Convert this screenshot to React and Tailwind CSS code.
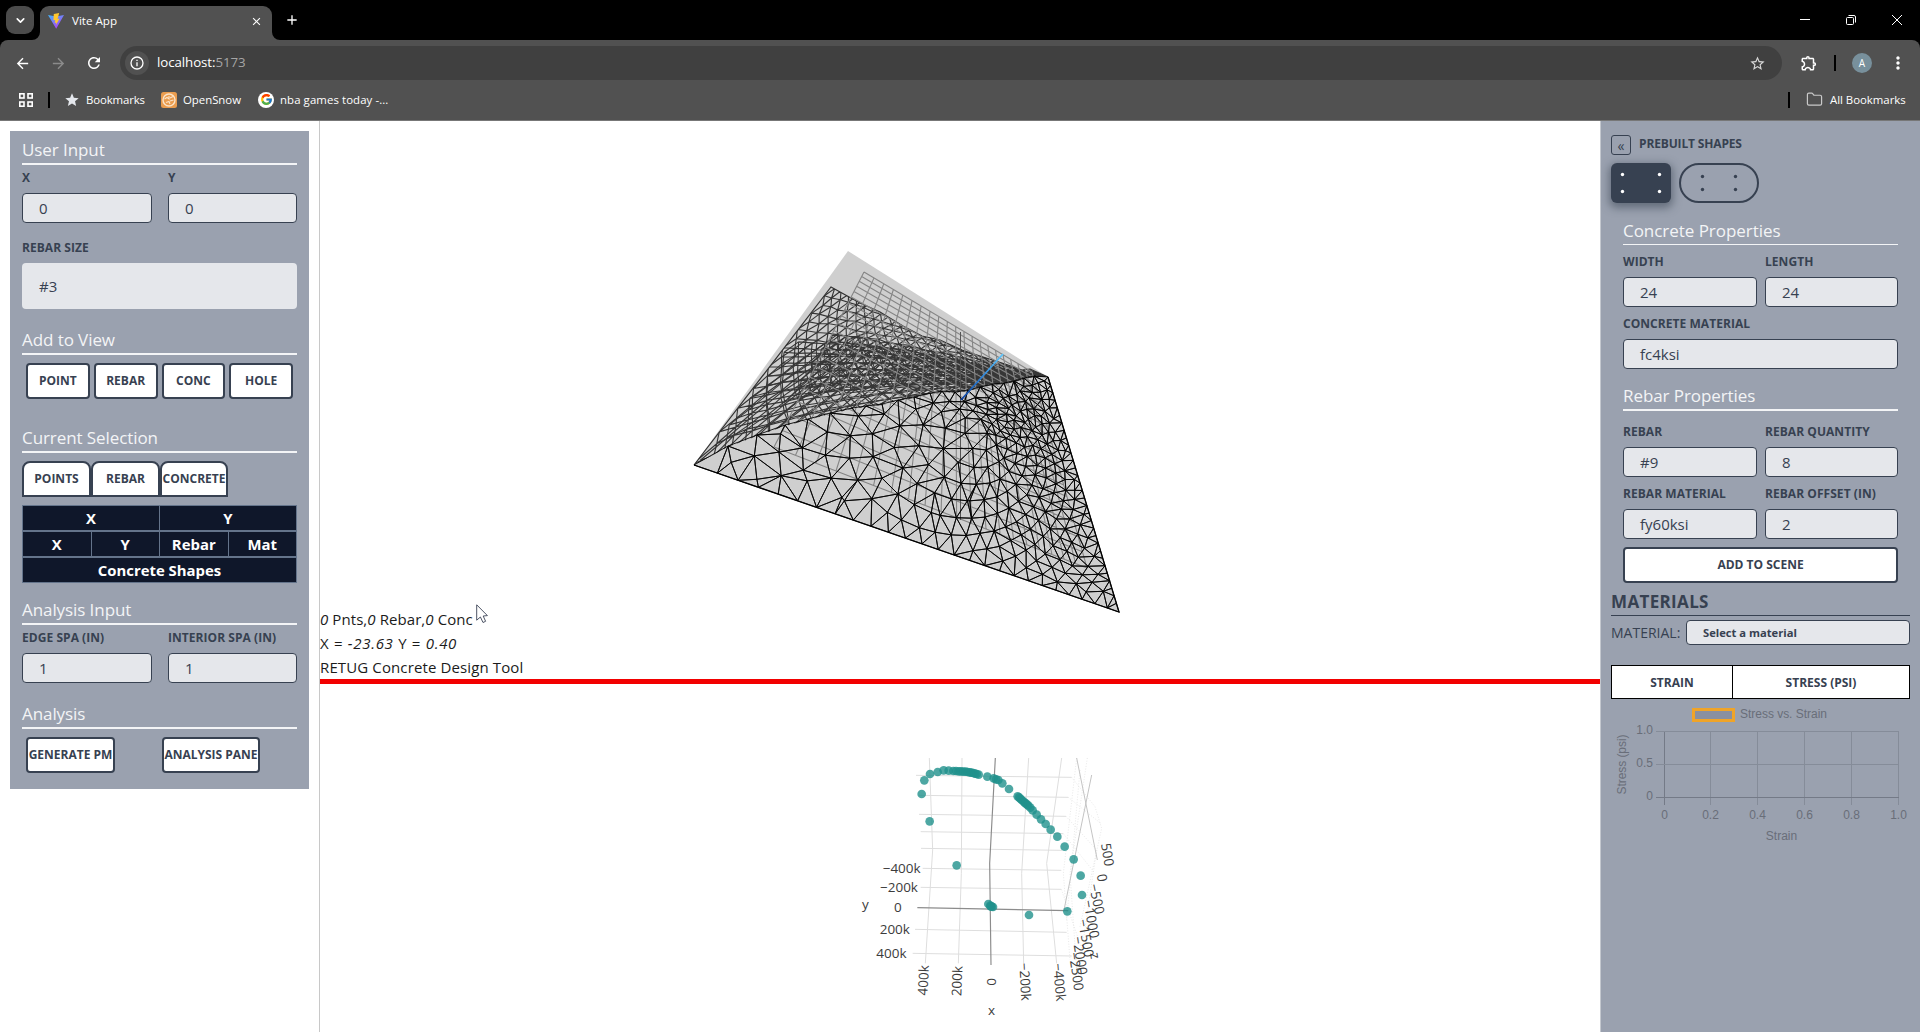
import React from 'react';
import { MdArrowBack, MdArrowForward, MdRefresh, MdStarBorder, MdStar, MdMoreVert, MdOutlineExtension, MdClose, MdAdd } from 'react-icons/md';
import { FcGoogle } from 'react-icons/fc';
import { ChevronDown, Folder } from 'lucide-react';

/* ---------- browser chrome ---------- */

function ViteLogo() {
  return (
    <svg width="16" height="16" viewBox="0 0 16 16" className="shrink-0">
      <defs>
        <linearGradient id="vite" x1="0" y1="0" x2="0.6" y2="1">
          <stop offset="0" stopColor="#41b7fb" />
          <stop offset="1" stopColor="#b040f5" />
        </linearGradient>
      </defs>
      <path d="M0 2 L8 3.4 L16 2 L8.2 15.8 Z" fill="url(#vite)" />
      <path d="M11.2 0 L5.8 1 L5.4 7.2 L7.2 6.9 L6.8 10 L8.3 9.5 L7.8 12.2 L11.6 5.6 L9.6 6 Z" fill="#ffc72e" />
    </svg>
  );
}

function TabStrip() {
  return (
    <div className="flex h-10 items-end bg-black text-white">
      <div className="ml-[6px] mb-[6px] flex h-7 w-7 items-center justify-center rounded-[9px] bg-[#4b4b4b]">
        <ChevronDown size={13} strokeWidth={3} />
      </div>
      <svg width="8" height="8" className="-ml-[2px] shrink-0"><path d="M8 0 V8 H0 A8 8 0 0 0 8 0" fill="#515151" /></svg>
      <div className="flex h-[34px] w-[232px] items-center rounded-t-[9px] bg-[#515151] pl-2 pr-[9px] pb-1">
        <ViteLogo />
        <span className="ml-2 flex-1 text-[11.6px]">Vite App</span>
        <MdClose size={13} />
      </div>
      <svg width="8" height="8" className="shrink-0"><path d="M0 0 V8 H8 A8 8 0 0 1 0 0" fill="#515151" /></svg>
      <MdAdd size={16} className="mb-3 ml-1" />
      <div className="mb-3 ml-auto flex h-4 items-center pr-[17px]">
        <svg width="104" height="16" viewBox="0 0 104 16" fill="none" stroke="white">
          <path d="M1 7.5 H11" />
          <rect x="47.5" y="5.5" width="7" height="7" rx="1" />
          <path d="M49.5 3.5 H55 Q56.5 3.5 56.5 5 V10.5" />
          <path d="M93 3 L103 13 M103 3 L93 13" />
        </svg>
      </div>
    </div>
  );
}

function Toolbar() {
  return (
    <div className="flex h-[46px] items-start rounded-t-[8px] bg-[#515151] pt-[6px] text-white">
      <div className="flex h-[34px] w-[120px] shrink-0 items-center pl-[14px]">
        <MdArrowBack size={17} />
        <MdArrowForward size={17} className="ml-[19px] text-[#8b8b8b]" />
        <MdRefresh size={18} className="ml-[18px]" />
      </div>
      <div className="flex h-[34px] w-[1662px] items-center rounded-full bg-[#404040] pl-[5px] pr-4">
        <div className="flex h-6 w-6 items-center justify-center rounded-full bg-[#515151]">
          <svg width="14" height="14" viewBox="0 0 14 14" fill="none" stroke="white" strokeWidth="1.3">
            <circle cx="7" cy="7" r="6" />
            <path d="M7 6.2 V10.3 M7 3.7 V5" />
          </svg>
        </div>
        <span className="ml-2 flex-1 text-[13.3px] tracking-[-0.08px]">localhost:<span className="text-[#a5a5a5]">5173</span></span>
        <MdStarBorder size={17} className="text-[#d8d8d8]" />
      </div>
      <div className="flex h-[34px] flex-1 items-center">
        <MdOutlineExtension size={18} className="ml-[18px]" />
        <span className="ml-[16px] h-4 w-[2px] bg-black" />
        <span className="ml-4 flex h-5 w-5 items-center justify-center rounded-full bg-[#78909c] text-[10px]">A</span>
        <MdMoreVert size={20} className="ml-4" />
      </div>
    </div>
  );
}

function BookmarksBar() {
  return (
    <div className="flex h-[35px] items-center border-b border-[#777] bg-[#515151] pb-[7px] text-[11.4px] tracking-[-0.02px] text-white">
      <svg width="14" height="14" viewBox="0 0 14 14" fill="none" stroke="white" strokeWidth="1.6" className="ml-[19px]">
        <rect x="0.8" y="0.8" width="4.2" height="4.2" /><rect x="9" y="0.8" width="4.2" height="4.2" />
        <rect x="0.8" y="9" width="4.2" height="4.2" /><rect x="9" y="9" width="4.2" height="4.2" />
      </svg>
      <span className="ml-[15px] h-4 w-[2px] bg-black" />
      <MdStar size={16} className="ml-[14px] text-[#e4e7ec]" />
      <span className="ml-[6px] w-[59px] whitespace-nowrap tracking-[-0.12px]">Bookmarks</span>
      <svg width="16" height="16" viewBox="0 0 16 16" className="ml-[16px]">
        <rect width="16" height="16" rx="2.5" fill="#ea9c4e" />
        <circle cx="8" cy="8" r="6" fill="none" stroke="#fbe3c8" strokeWidth="1.4" />
        <path d="M3.5 7 L6 5.5 L8 7 L8 4 M9 9 L12.5 8 M9 6 L12 4.6 M5 10.5 L8 9.5 L9 12" stroke="#fbe3c8" fill="none" strokeWidth="1.1" />
      </svg>
      <span className="ml-[6px] w-[59px] whitespace-nowrap">OpenSnow</span>
      <span className="ml-4 flex h-4 w-4 items-center justify-center rounded-full bg-white"><FcGoogle size={13} /></span>
      <span className="ml-[6px] whitespace-nowrap tracking-[0.09px]">nba games today -...</span>
      <span className="ml-auto h-4 w-[2px] bg-black" />
      <Folder size={17} strokeWidth={1.7} className="ml-4 text-[#c9c9c9]" />
      <span className="ml-[7px] mr-[15px] w-[75px] whitespace-nowrap">All Bookmarks</span>
    </div>
  );
}

/* ---------- form pieces ---------- */

function Heading({ className = '', children }) {
  return <h2 className={'h-7 whitespace-nowrap border-b-2 border-[#f3f4f6] text-[17px] font-normal leading-[25px] tracking-[-0.08px] text-[#f3f4f6] ' + className}>{children}</h2>;
}

function Field({ label, value, className = '' }) {
  return (
    <div className={className}>
      <div className="h-4 whitespace-nowrap text-[12px] font-bold leading-[15px] tracking-[0.05px] text-[#374151]">{label}</div>
      <div className="mt-[7px] h-[30px] rounded-[4px] border border-[#374151] bg-[#e5e7eb] pl-4 text-[15px] leading-[29px] text-[#374151]">{value}</div>
    </div>
  );
}

function Button({ className = '', children }) {
  return (
    <button className={'flex h-9 items-center justify-center overflow-hidden whitespace-nowrap rounded-[4px] border-2 border-[#374151] bg-white text-[12px] font-bold text-[#374151] ' + className}>
      {children}
    </button>
  );
}

function SelectionTab({ className = '', children }) {
  return (
    <button className={'flex h-9 items-center justify-center whitespace-nowrap rounded-t-[8px] border-2 border-[#374151] bg-white text-[12px] font-bold text-[#374151] ' + className}>
      {children}
    </button>
  );
}

function SelectionRow({ cells }) {
  return (
    <div className="flex h-[26px] border border-[#64748b] bg-[#0f172a] text-[14.9px] font-bold leading-6 text-white">
      {cells.map((c, i) => (
        <div key={i} className={'flex-1 text-center ' + (i ? 'border-l border-[#64748b]' : '')}>{c}</div>
      ))}
    </div>
  );
}

function LeftPanel() {
  return (
    <aside className="w-[319px] shrink-0 bg-white pl-[10px] pt-[10px]">
      <div className="h-[658px] w-[299px] bg-[#9aa1af] pl-3 pr-3 pt-[6px]">
        <Heading>User Input</Heading>
        <div className="mt-[5px] flex gap-4">
          <Field label="X" value="0" className="w-[130px]" />
          <Field label="Y" value="0" className="w-[129px]" />
        </div>
        <div className="mt-[17px] h-4 text-[12px] font-bold leading-[15px] tracking-[0.05px] text-[#374151]">REBAR SIZE</div>
        <div className="mt-[7px] h-[46px] rounded-[4px] bg-[#e5e7eb] pl-[17px] text-[15px] leading-[47px] text-[#374151]">#3</div>
        <Heading className="mt-[18px]">Add to View</Heading>
        <div className="mt-2 grid grid-cols-4 gap-1 px-1">
          <Button>POINT</Button>
          <Button>REBAR</Button>
          <Button>CONC</Button>
          <Button>HOLE</Button>
        </div>
        <Heading className="mt-[26px]">Current Selection</Heading>
        <div className="mt-2 flex">
          <SelectionTab className="w-[69px]">POINTS</SelectionTab>
          <SelectionTab className="w-[69px]">REBAR</SelectionTab>
          <SelectionTab className="w-[68px]">CONCRETE</SelectionTab>
        </div>
        <div className="mt-2">
          <SelectionRow cells={['X', 'Y']} />
          <SelectionRow cells={['X', 'Y', 'Rebar', 'Mat']} />
          <SelectionRow cells={['Concrete Shapes']} />
        </div>
        <Heading className="mt-[14px]">Analysis Input</Heading>
        <div className="mt-[5px] flex gap-4">
          <Field label="EDGE SPA (IN)" value="1" className="w-[130px]" />
          <Field label="INTERIOR SPA (IN)" value="1" className="w-[129px]" />
        </div>
        <Heading className="mt-[18px]">Analysis</Heading>
        <div className="mt-2 flex pl-1">
          <Button className="w-[89px]">GENERATE PM</Button>
          <Button className="ml-[47px] w-[98px]">ANALYSIS PANE</Button>
        </div>
      </div>
    </aside>
  );
}

/* ---------- 3D concrete surface ---------- */

// Projective map from the unit square onto quad p0(0,0) p1(1,0) p2(1,1) p3(0,1).
function projective([p0, p1, p2, p3]) {
  const dx1 = p1[0] - p2[0], dx2 = p3[0] - p2[0], dx3 = p0[0] - p1[0] + p2[0] - p3[0];
  const dy1 = p1[1] - p2[1], dy2 = p3[1] - p2[1], dy3 = p0[1] - p1[1] + p2[1] - p3[1];
  const d = dx1 * dy2 - dx2 * dy1;
  const g = (dx3 * dy2 - dx2 * dy3) / d, h = (dx1 * dy3 - dx3 * dy1) / d;
  return (u, v) => {
    const w = g * u + h * v + 1;
    return [
      ((p1[0] - p0[0] + g * p1[0]) * u + (p3[0] - p0[0] + h * p3[0]) * v + p0[0]) / w,
      ((p1[1] - p0[1] + g * p1[1]) * u + (p3[1] - p0[1] + h * p3[1]) * v + p0[1]) / w,
    ];
  };
}

const seg = (a, b) => `M${a[0].toFixed(1)} ${a[1].toFixed(1)}L${b[0].toFixed(1)} ${b[1].toFixed(1)}`;

function noise(i, j) {
  const s = Math.sin(i * 127.1 + j * 311.7) * 43758.5453;
  return s - Math.floor(s) - 0.5;
}

// Bowyer-Watson triangulation; returns index triples.
function triangulate(points) {
  const pts = points.concat([[-9000, -9000], [12000, -9000], [800, 14000]]);
  const n = points.length;
  const make = (a, b, c) => {
    const [ax, ay] = pts[a], [bx, by] = pts[b], [cx, cy] = pts[c];
    const d = 2 * (ax * (by - cy) + bx * (cy - ay) + cx * (ay - by)) || 1e-9;
    const A = ax * ax + ay * ay, B = bx * bx + by * by, C = cx * cx + cy * cy;
    const x = (A * (by - cy) + B * (cy - ay) + C * (ay - by)) / d;
    const y = (A * (cx - bx) + B * (ax - cx) + C * (bx - ax)) / d;
    return { v: [a, b, c], x, y, r: (ax - x) ** 2 + (ay - y) ** 2 };
  };
  let tris = [make(n, n + 1, n + 2)];
  for (let i = 0; i < n; i++) {
    const [px, py] = pts[i];
    const edges = new Map();
    const keep = [];
    for (const t of tris) {
      if ((px - t.x) ** 2 + (py - t.y) ** 2 < t.r) {
        for (const [a, b] of [[t.v[0], t.v[1]], [t.v[1], t.v[2]], [t.v[2], t.v[0]]]) {
          const key = a < b ? a * 5000 + b : b * 5000 + a;
          edges.set(key, edges.has(key) ? null : [a, b]);
        }
      } else keep.push(t);
    }
    edges.forEach((e) => { if (e) keep.push(make(e[0], e[1], i)); });
    tris = keep;
  }
  return tris.map((t) => t.v).filter((v) => v.every((k) => k < n));
}

function inside([x, y], poly) {
  let hit = false;
  for (let i = 0, j = poly.length - 1; i < poly.length; j = i++) {
    const [xi, yi] = poly[i], [xj, yj] = poly[j];
    if (yi > y !== yj > y && x < ((xj - xi) * (y - yi)) / (yj - yi) + xi) hit = !hit;
  }
  return hit;
}

function edgeDistance([x, y], [ax, ay], [bx, by]) {
  const l = Math.hypot(bx - ax, by - ay);
  return Math.abs((bx - ax) * (ay - y) - (ax - x) * (by - ay)) / l;
}

const L = [694, 465], TR = [1048, 377], BR = [1119, 612];
const ridge = [[728, 446], [757, 435], [785, 425], [808, 419], [830, 413], [852, 408], [866, 406], [882, 404], [898, 400], [914, 397], [930, 393], [942, 391], [955, 392], [968, 390], [980, 387], [992, 384], [1004, 383], [1014, 381], [1024, 378], [1034, 376]];
const nearPoly = [L, ...ridge, TR, BR];

// Near side: nodes walk around concentric ellipses, then get triangulated.
const nearMesh = (() => {
  const pts = [...nearPoly];
  for (let f = 0.055; f < 0.985;) {
    pts.push([L[0] + (BR[0] - L[0]) * f, L[1] + (BR[1] - L[1]) * f]);
    f += 0.05 - 0.022 * f;
  }
  for (let f = 0.035; f < 0.98; f += 0.032) pts.push([TR[0] + (BR[0] - TR[0]) * f, TR[1] + (BR[1] - TR[1]) * f]);
  for (let k = 0; k < 22; k++) {
    const cx = 988 - 6.8 * k, cy = 434 + 4.3 * k, rx = 16.5 * k, ry = 12.4 * k;
    let t = k * 0.37;
    const end = t + Math.PI * 2 - 0.02;
    let i = 0;
    do {
      const c = Math.cos(t), s = Math.sin(t);
      const j = 1.5;
      const p = [cx + rx * c + noise(k, i) * j, cy + ry * s + 0.12 * rx * c + noise(i, k) * j];
      if (inside(p, nearPoly) && edgeDistance(p, L, BR) > 6 && edgeDistance(p, TR, BR) > 4 && ridge.every((q) => Math.hypot(q[0] - p[0], q[1] - p[1]) > 7.5)) pts.push(p);
      const left = (1 - c) / 2;
      const step = 10 + 13 * left * left + 3 * Math.max(0, s);
      t += k ? step / Math.hypot(rx * s, ry * c) : 7;
      i++;
    } while (t < end);
  }
  let d = '';
  for (const [a, b, c] of triangulate(pts)) {
    const mid = [(pts[a][0] + pts[b][0] + pts[c][0]) / 3, (pts[a][1] + pts[b][1] + pts[c][1]) / 3];
    if (inside(mid, nearPoly)) d += seg(pts[a], pts[b]) + seg(pts[b], pts[c]) + seg(pts[c], pts[a]);
  }
  return d;
})();

// Far side: staggered rows sweeping from the left edge toward the right corner.
function farMesh(rows, cols, from, to, ox, oy, start = 0) {
  const at = (r, c) => {
    const s = from + (to - from) * Math.pow(Math.max(0, r) / rows, 0.8);
    const q = Math.max(0, Math.min(1, (c + (r % 2) * 0.5) / cols));
    const t = 1 - Math.pow(1 - q, 1.55 - 0.6 * s);
    const x0 = 694 + 137 * s, y0 = 465 - 178 * s;
    const mx = 842 + 80 * s, my = 396 - 76 * s;
    const u = 1 - t;
    return [
      u * u * x0 + 2 * u * t * mx + t * t * 1047 + noise(r, c) * 2 + ox,
      u * u * y0 + 2 * u * t * my + t * t * (388 - 11 * s) + noise(c, r) * 2.4 + oy,
    ];
  };
  let d = '';
  for (let r = 0; r <= rows; r++)
    for (let c = start; c < cols; c++) {
      d += seg(at(r, c), at(r, c + 1));
      if (r < rows) {
        d += seg(at(r, c), at(r + 1, c));
        d += r % 2 ? seg(at(r, c), at(r + 1, c + 1)) : seg(at(r, c + 1), at(r + 1, c));
      }
    }
  return d;
}

const groundGrid = (() => {
  const p = projective([[864, 272], [1032, 372], [1087, 568], [774, 447]]);
  let d = '';
  for (let i = 0; i <= 20; i++) {
    d += seg(p(i / 20, 0), p(i / 20, 1)) + seg(p(0, i / 20), p(1, i / 20));
  }
  return d;
})();

const toPath = (pts) => 'M' + pts.map((p) => p.join(' ')).join('L') + 'Z';
const skyline = [[831, 287], [860, 303], [880, 312], [903, 326], [922, 336], [940, 340], [962, 350], [980, 356], [1005, 364], [1022, 370], [1030, 369], [1048, 377]];
const near = toPath(nearPoly);
const far = toPath([L, ...skyline, ...[...ridge].reverse().map(([x, y]) => [x, y + 1])]);
const farSparse = farMesh(17, 24, 0, 1, 0, 0);
const farDouble = farMesh(9, 20, 0.03, 0.7, 3, 2);
const farDense = farMesh(8, 34, 0.3, 0.76, -1, 1, 5);

function SurfaceView() {
  return (
    <svg width="1280" height="486" viewBox="320 121 1280 486" className="block overflow-visible">
      <defs>
        <clipPath id="far"><path d={far} /></clipPath>
        <linearGradient id="axis" gradientUnits="userSpaceOnUse" x1="961" y1="400" x2="1003" y2="354">
          <stop offset="0" stopColor="#0b3fa0" /><stop offset="0.4" stopColor="#2476d0" /><stop offset="1" stopColor="#5cc8ff" />
        </linearGradient>
      </defs>
      <path d="M694 465 L848 251 L1048 377 L1119 612 Z" fill="#cfcfcf" />
      <g clipPath="url(#far)" stroke="#363636" fill="none">
        <path d={farSparse} strokeWidth="1.15" />
        <path d={farDouble} strokeWidth="1.1" />
        <path d={farDense} strokeWidth="1.1" />
      </g>
      <path d={'M694 465 L' + skyline.map((p) => p.join(' ')).join('L')} fill="none" stroke="#303030" strokeWidth="1.2" />
      <path d={groundGrid} stroke="#858585" strokeWidth="1.1" fill="none" />
      <path d="M960.5 332 V520" stroke="#555" strokeWidth="1" />
      <path d={nearMesh} stroke="#050505" strokeWidth="0.9" fill="none" />
      <path d="M1048 377 L1119 612 L694 465" fill="none" stroke="#000" strokeWidth="1.3" />
      <path d="M961 400 L1003 354" stroke="url(#axis)" strokeWidth="1.8" />
    </svg>
  );
}

/* ---------- 3D scatter ---------- */

const scatter = [
  [215, 162], [239, 244], [320, 376], [223, 121], [240, 102], [263, 96], [281, 91], [296, 92], [310, 93], [318, 93], [326, 94], [333, 94], [340, 95], [347, 95], [353, 96], [359, 97], [364, 98], [370, 99], [375, 101], [380, 102], [386, 104],
  [412, 110], [431, 115], [438, 118], [445, 120], [457, 130], [477, 147],
  [503, 169], [507, 172], [511, 176], [515, 180], [519, 183], [523, 187], [527, 190], [531, 194], [535, 197], [541, 203], [548, 211], [560, 224], [573, 238], [587, 252], [602, 269], [622, 290], [644, 320], [671, 358], [692, 407], [696, 465], [652, 514], [537, 525],
  [415, 492], [421, 497], [425, 500], [429, 501], [422, 499],
];

const axisLabels = [
  ['−400k', 98, 399, 0], ['−200k', 90, 456, 0], ['0', 132, 516, 0], ['200k', 89, 583, 0], ['400k', 79, 653, 0],
  ['400k', 232, 767, -87], ['200k', 334, 769, -88], ['0', 411, 714, 90], ['−200k', 508, 669, 87], ['−400k', 609, 671, 85],
  ['500', 753, 312, 81], ['0', 740, 404, 81], ['−500', 717, 435, 78], ['−1000', 700, 483, 80], ['−1500', 684, 540, 80], ['−2000', 668, 592, 82], ['−2500', 657, 639, 82],
];

function ScatterView() {
  return (
    <svg width="1280" height="348" viewBox="320 684 1280 348" className="block">
      <g transform="translate(850 740) scale(0.33333)">
        <g stroke="#dedede" strokeWidth="3" fill="none">
          <path d="M238 54 L248 330 L226 670 M336 54 L334 400 L325 670 M536 54 L515 400 L521 670 M635 54 L590 370 L620 670" />
          <path d="M198 106 L665 112 M207 166 L655 172 M207 223 L648 229 M212 275 L640 281 M213 325 L636 331 M218 385 L634 391 M212 442 L634 448 M195 568 L650 577 M188 640 L665 648" />
        </g>
        <g stroke="#e4e4e4" strokeWidth="2.5" strokeDasharray="3 5" fill="none">
          <path d="M680 54 L640 400 L660 660 M712 54 L660 400 L680 690 M665 112 L735 200 L755 265 L690 560 M655 172 L752 250 M648 229 L740 330 L700 600 M640 281 L735 400 M690 90 L650 540 M634 448 L700 640" />
        </g>
        <path d="M680 54 L742 360 M725 105 L642 510" stroke="#c4c4c4" strokeWidth="3" fill="none" />
        <path d="M436 54 L419 370 L423 675 M202 503 L655 512" stroke="#8c8c8c" strokeWidth="3.5" fill="none" />
        {scatter.map(([x, y], i) => <circle key={i} cx={x} cy={y} r="13" fill="#21918c" fillOpacity="0.8" />)}
        <g fill="#3c3c3c" className="font-['Open_Sans']" fontSize="40.5">
          {axisLabels.map(([t, x, y, a], i) => <text key={i} transform={`translate(${x} ${y}) rotate(${a})`}>{t}</text>)}
          <text x="36" y="508">y</text>
          <text x="414" y="824">x</text>
          <text transform="translate(720 640) rotate(80)">z</text>
        </g>
      </g>
    </svg>
  );
}

function Canvas() {
  return (
    <main className="relative flex h-[911px] w-[1281px] shrink-0 flex-col overflow-hidden border-l border-[#c8c8c8] bg-white">
      <SurfaceView />
      <div className="h-[72px] whitespace-nowrap text-[15px] leading-6 text-[#1b1b1b]">
        <p className="tracking-[0.08px]"><i>0</i> Pnts,<i>0</i> Rebar,<i>0</i> Conc</p>
        <p className="tracking-[0.7px]">X = <i>-23.63</i> Y = <i>0.40</i></p>
        <p className="tracking-[0.12px]">RETUG Concrete Design Tool</p>
      </div>
      <div className="h-[5px] bg-[#f20000]" />
      <ScatterView />
      <svg width="14" height="21" viewBox="0 0 14 21" className="absolute left-[156px] top-[483px]">
        <path d="M0.7 0.8 V16.2 L4.4 13 L7 18.5 L9.6 17.3 L7.2 12 L11.4 11.6 Z" fill="white" stroke="#3a4255" strokeWidth="0.9" />
      </svg>
    </main>
  );
}

/* ---------- right panel ---------- */

function StressChart() {
  const xs = [1664.5, 1710.5, 1757.5, 1804.5, 1851.5, 1898.5];
  const ys = [731.5, 764.5, 797.5];
  const xl = ['0', '0.2', '0.4', '0.6', '0.8', '1.0'];
  const yl = ['1.0', '0.5', '0'];
  return (
    <svg width="299" height="150" viewBox="1611 700 299 150" className="mt-px block font-['Liberation_Sans']" fontSize="12" fill="#696e79">
      <rect x="1693.5" y="709.5" width="40" height="11" fill="#8a90a0" stroke="#f0a428" strokeWidth="3" />
      <text x="1740" y="718" textLength="87">Stress vs. Strain</text>
      <g stroke="#858c99">
        {xs.map((x, i) => <path key={x} d={`M${x} 731 V805`} stroke={i ? '#858c99' : '#747a87'} />)}
        {ys.map((y, i) => <path key={y} d={`M1656 ${y} H1899`} stroke={i === 2 ? '#747a87' : '#858c99'} />)}
      </g>
      {xs.map((x, i) => <text key={x} x={x} y="819" textAnchor="middle">{xl[i]}</text>)}
      {ys.map((y, i) => <text key={y} x="1653" y={y + 2.5} textAnchor="end">{yl[i]}</text>)}
      <text x="1781.5" y="840" textAnchor="middle">Strain</text>
      <text transform="translate(1626 764.5) rotate(-90)" textAnchor="middle" textLength="60">Stress (psi)</text>
    </svg>
  );
}

function RightPanel() {
  return (
    <aside className="h-[911px] w-[320px] shrink-0 border-l border-[#c4c8cf] bg-[#9aa1af] pl-[10px] pr-[10px] pt-[14px] text-[#374151]">
      <div className="flex h-5">
        <button className="flex h-5 w-5 items-center justify-center rounded-[3px] border border-[#374151] text-[14px]">«</button>
        <span className="ml-2 text-[12px] font-bold leading-[17px] tracking-[-0.15px]">PREBUILT SHAPES</span>
      </div>
      <div className="mt-2 flex gap-2">
        <div className="h-10 w-[60px] rounded-[6px] bg-[#374151] shadow-[0_3px_8px_2px_rgba(55,65,81,0.55)]">
          <svg width="60" height="40" fill="white">
            <circle cx="11.5" cy="11.5" r="1.7" /><circle cx="48.5" cy="11.5" r="1.7" />
            <circle cx="11.5" cy="28.5" r="1.7" /><circle cx="48.5" cy="28.5" r="1.7" />
          </svg>
        </div>
        <svg width="80" height="40" fill="#374151">
          <rect x="1" y="1" width="78" height="38" rx="19" fill="none" stroke="#374151" strokeWidth="2" />
          <circle cx="23.5" cy="13.5" r="1.7" /><circle cx="56.5" cy="13.5" r="1.7" />
          <circle cx="23.5" cy="26.5" r="1.7" /><circle cx="56.5" cy="26.5" r="1.7" />
        </svg>
      </div>
      <div className="pl-3 pr-3 pt-[15px]">
        <h2 className="h-[27px] border-b border-[#f3f4f6] text-[17px] leading-[25px] tracking-[-0.04px] text-[#f3f4f6]">Concrete Properties</h2>
        <div className="mt-[9px] flex gap-2">
          <Field label="WIDTH" value="24" className="w-[134px]" />
          <Field label="LENGTH" value="24" className="w-[133px]" />
        </div>
        <Field label="CONCRETE MATERIAL" value="fc4ksi" className="mt-[9px]" />
        <Heading className="mt-[14px]">Rebar Properties</Heading>
        <div className="mt-[13px] flex gap-2">
          <Field label="REBAR" value="#9" className="w-[134px]" />
          <Field label="REBAR QUANTITY" value="8" className="w-[133px]" />
        </div>
        <div className="mt-[9px] flex gap-2">
          <Field label="REBAR MATERIAL" value="fy60ksi" className="w-[134px]" />
          <Field label="REBAR OFFSET (IN)" value="2" className="w-[133px]" />
        </div>
        <Button className="mt-2 w-full">ADD TO SCENE</Button>
      </div>
      <h1 className="mt-[7px] h-[26px] border-b border-[#374151] text-[17px] font-bold leading-[23px] tracking-[0.35px]">MATERIALS</h1>
      <div className="mt-1 flex h-[25px]">
        <span className="w-[75px] whitespace-nowrap text-[14px] leading-[26px]">MATERIAL:</span>
        <div className="flex-1 rounded-[4px] border border-[#374151] bg-[#e5e7eb] pl-4 text-[11.2px] font-bold leading-6">Select a material</div>
      </div>
      <div className="mt-5 flex h-[34px] border border-black bg-white text-center text-[12px] font-bold leading-[33px]">
        <div className="w-[121px] border-r border-black">STRAIN</div>
        <div className="flex-1">STRESS (PSI)</div>
      </div>
      <StressChart />
    </aside>
  );
}

export default function App() {
  return (
    <div className="h-[1032px] w-[1920px] overflow-hidden bg-white font-['Open_Sans','Noto_Sans',sans-serif]">
      <div className="bg-black">
        <TabStrip />
        <Toolbar />
        <BookmarksBar />
      </div>
      <div className="flex h-[911px]">
        <LeftPanel />
        <Canvas />
        <RightPanel />
      </div>
    </div>
  );
}
